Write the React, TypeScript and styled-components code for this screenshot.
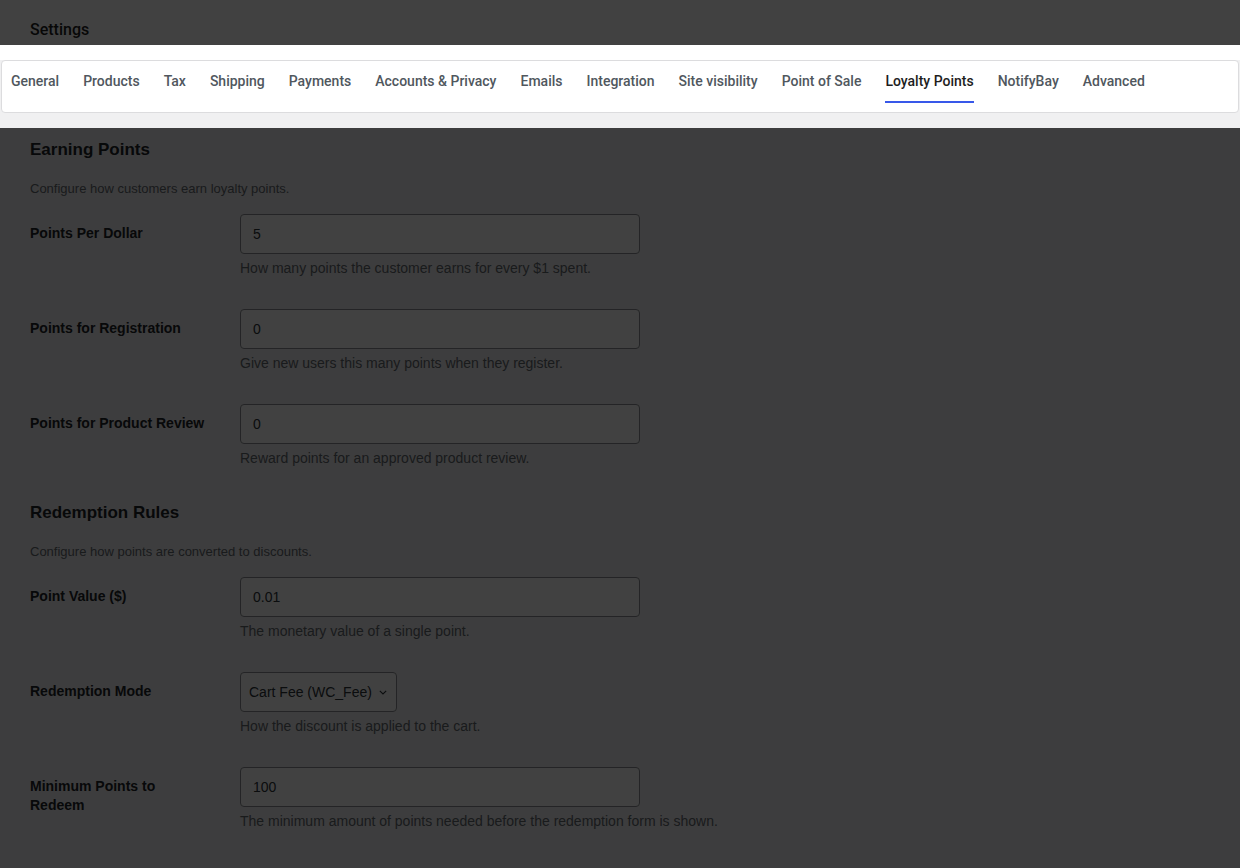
import React from 'react';
import styled, { createGlobalStyle } from 'styled-components';

const GlobalStyle = createGlobalStyle`
    html, body {
        margin: 0;
        padding: 0;
        background: #f0f0f1;
        overflow: hidden;
    }
    * {
        box-sizing: border-box;
    }
`

const Page = styled.div`
    position: relative;
    width: 1240px;
    height: 868px;
    background: #f0f0f1;
    font-family: "Liberation Sans", Arial, sans-serif;
    color: #1d2327;
`

/** 顶部白色标题栏 */
const Header = styled.header`
    height: 60px;
    background: #fff;
    display: flex;
    align-items: center;
    padding: 0 30px 2px;
`

const HeaderTitle = styled.h1`
    margin: 0;
    font-family: Roboto, "Liberation Sans", sans-serif;
    font-size: 16px;
    font-weight: 500;
    color: #1e1e1e;
`

/** 设置页的标签导航 */
const TabCard = styled.nav`
    display: flex;
    gap: 24px;
    margin: 0 1px;
    padding: 0 10px 9px 9px;
    background: #fff;
    border: 1px solid #dcdcde;
    border-radius: 4px;
`

const Tab = styled.a<{ $active?: boolean }>`
    display: block;
    padding: 10px 0;
    font-family: Roboto, "Liberation Sans", sans-serif;
    font-size: 14px;
    line-height: 20px;
    font-weight: 500;
    color: ${props => props.$active ? '#1e1e1e' : '#50575e'};
    border-bottom: 2px solid ${props => props.$active ? '#3858e9' : 'transparent'};
    text-decoration: none;
    white-space: nowrap;
`

const Content = styled.main`
    padding: 26px 30px 0;
`

const SectionTitle = styled.h2`
    margin: 0 0 18px;
    font-size: 17px;
    line-height: 22px;
    font-weight: 700;
    color: #1d2327;
`

const SectionIntro = styled.p`
    margin: 0;
    font-size: 13px;
    line-height: 20px;
    color: #646970;
`

const FormTable = styled.div`
    display: flex;
    flex-direction: column;
    margin-bottom: 18px;
`

const Row = styled.div`
    display: grid;
    grid-template-columns: 210px 1fr;
    padding: 15px 0;
`

const Label = styled.label`
    padding-top: 10px;
    width: 178px;
    font-size: 14px;
    line-height: 19px;
    font-weight: 700;
    color: #1d2327;
`

const Field = styled.div`
    display: flex;
    flex-direction: column;
    align-items: flex-start;
`

const TextInput = styled.input`
    width: 400px;
    height: 40px;
    padding: 0 12px;
    font-family: "Liberation Sans", Arial, sans-serif;
    font-size: 14px;
    color: #2c3338;
    background: #fff;
    border: 1px solid #8c8f94;
    border-radius: 4px;
    outline: none;
`

const SelectBox = styled.div`
    display: inline-flex;
    align-items: center;
    gap: 7px;
    height: 40px;
    padding: 0 9px 0 8px;
    font-size: 14px;
    color: #2c3338;
    background: #fff;
    border: 1px solid #8c8f94;
    border-radius: 4px;
`

const Description = styled.p`
    margin: 4px 0 0;
    font-size: 14px;
    line-height: 21px;
    color: #646970;
`

/** 引导遮罩: 只露出标签导航区域 */
const Spotlight = styled.div`
    position: absolute;
    top: 45px;
    left: 0;
    width: 100%;
    height: 83px;
    box-shadow: 0 0 0 2000px rgba(0, 0, 0, .745);
    pointer-events: none;
`

const tabs = [
    'General', 'Products', 'Tax', 'Shipping', 'Payments', 'Accounts & Privacy', 'Emails',
    'Integration', 'Site visibility', 'Point of Sale', 'Loyalty Points', 'NotifyBay', 'Advanced'
]

interface FieldDef {
    label: string
    value: string
    help: string
    select?: boolean
}

const earning: FieldDef[] = [
    { label: 'Points Per Dollar', value: '5', help: 'How many points the customer earns for every $1 spent.' },
    { label: 'Points for Registration', value: '0', help: 'Give new users this many points when they register.' },
    { label: 'Points for Product Review', value: '0', help: 'Reward points for an approved product review.' },
]

const redemption: FieldDef[] = [
    { label: 'Point Value ($)', value: '0.01', help: 'The monetary value of a single point.' },
    { label: 'Redemption Mode', value: 'Cart Fee (WC_Fee)', help: 'How the discount is applied to the cart.', select: true },
    { label: 'Minimum Points to Redeem', value: '100', help: 'The minimum amount of points needed before the redemption form is shown.' },
]

function Chevron () {
    return (
        <svg width="8" height="5" viewBox="0 0 8 5" fill="none">
            <path d="M0.8 0.8 L4 4 L7.2 0.8" stroke="#2c3338" strokeWidth="1.1" />
        </svg>
    )
}

function Section ({ title, intro, fields }: { title: string, intro: string, fields: FieldDef[] }) {
    return (
        <section>
            <SectionTitle>{title}</SectionTitle>
            <SectionIntro>{intro}</SectionIntro>
            <FormTable>
                {fields.map(f => (
                    <Row key={f.label}>
                        <Label>{f.label}</Label>
                        <Field>
                            {f.select ? (
                                <SelectBox>
                                    {f.value}
                                    <Chevron />
                                </SelectBox>
                            ) : (
                                <TextInput defaultValue={f.value} />
                            )}
                            <Description>{f.help}</Description>
                        </Field>
                    </Row>
                ))}
            </FormTable>
        </section>
    )
}

export default function App () {
    return (
        <Page>
            <GlobalStyle />
            <Header>
                <HeaderTitle>Settings</HeaderTitle>
            </Header>
            <TabCard>
                {tabs.map(t => (
                    <Tab key={t} $active={t === 'Loyalty Points'}>{t}</Tab>
                ))}
            </TabCard>
            <Content>
                <Section
                    title="Earning Points"
                    intro="Configure how customers earn loyalty points."
                    fields={earning}
                />
                <Section
                    title="Redemption Rules"
                    intro="Configure how points are converted to discounts."
                    fields={redemption}
                />
            </Content>
            <Spotlight />
        </Page>
    );
}
